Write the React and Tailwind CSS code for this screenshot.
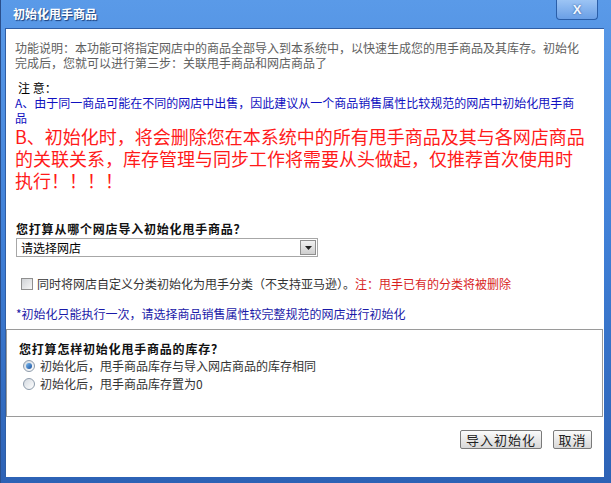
import React from "react";

const font = { fontFamily: '"Noto Sans CJK SC", "Liberation Sans", sans-serif' };

const Radio = ({ checked }) => (
  <span className="relative inline-flex w-[12px] h-[12px] rounded-full border border-[#8d9bab] bg-gradient-to-br from-[#d3d9e0] to-white items-center justify-center mr-[5px] shrink-0">
    {checked && (
      <span className="w-[6px] h-[6px] rounded-full bg-gradient-to-br from-[#7dbdf2] to-[#1a4f9c]" />
    )}
  </span>
);

const App = () => {
  return (
    <div
      className="w-[611px] h-[483px] bg-gradient-to-b from-[#5a9ae8] via-[#3f7fd6] to-[#2d62b5] flex flex-col text-[12px] border-l border-[#2a4f8c]"
      style={font}
    >
      {/* title bar */}
      <div className="h-[28px] shrink-0 flex items-start justify-between pl-[12px] pr-[13px]">
        <span
          className="mt-[6px] text-white font-bold text-[12px] leading-[16px]"
          style={{ textShadow: "1px 1px 1px #1b3f7a" }}
        >
          初始化甩手商品
        </span>
        <div
          className="w-[42px] h-[20px] rounded-b-[4px] border border-t-0 border-[#2a5ea8] bg-gradient-to-b from-[#9cc4f4] to-[#6a9fe6] flex items-center justify-center text-[#f2f7ff] font-bold text-[13px]"
          style={{ fontFamily: '"Liberation Sans", sans-serif', textShadow: "0 0 2px #24508f" }}
        >
          X
        </div>
      </div>

      {/* client area */}
      <div className="flex-1 ml-[4px] mr-[7px] mb-[6px] bg-white border-l border-t border-[#2f5ea5] flex flex-col">
        <div className="pl-[9px] pt-[11px] w-[582px]">
          <p className="text-[#5e5e5e] leading-[15px] whitespace-nowrap">
            功能说明：本功能可将指定网店中的商品全部导入到本系统中，以快速生成您的甩手商品及其库存。初始化
            <br />
            完成后，您就可以进行第三步：关联甩手商品和网店商品了
          </p>
          <p className="mt-[10px] pl-[3px] leading-[15px] text-black">注 意：</p>
          <p className="leading-[15px] text-[#1010c0] whitespace-nowrap">
            A、由于同一商品可能在不同的网店中出售，因此建议从一个商品销售属性比较规范的网店中初始化甩手商
            <br />
            品
          </p>
          <p className="leading-[22px] text-[18px] text-[#ff1a1a]">
            B、初始化时，将会删除您在本系统中的所有甩手商品及其与各网店商品的关联关系，库存管理与同步工作将需要从头做起，仅推荐首次使用时执行！！！！
          </p>
        </div>

        <div className="pl-[10px]">
          <p className="mt-[30px] font-bold leading-[16px] tracking-[0.8px] text-[#111]">您打算从哪个网店导入初始化甩手商品？</p>
          <div className="mt-[1px] w-[302px] h-[19px] border border-[#a7a7a7] flex items-center justify-between bg-white">
            <span className="pl-[4px] text-[12px] text-black">请选择网店</span>
            <span className="w-[16px] h-[15px] mr-[1px] border border-[#8f8f8f] bg-gradient-to-b from-[#f1f1f1] to-[#cfcfcf] flex items-center justify-center">
              <svg width="7" height="4" viewBox="0 0 7 4">
                <path d="M0 0 L7 0 L3.5 4 Z" fill="#222" />
              </svg>
            </span>
          </div>

          <div className="mt-[19px] pl-[5px] flex items-center h-[16px]">
            <span className="w-[12px] h-[12px] border border-[#8f8f8f] bg-gradient-to-br from-[#cfd2d6] to-[#f6f6f6] mr-[4px] shrink-0" />
            <span className="text-[#333]">同时将网店自定义分类初始化为甩手分类（不支持亚马逊）。</span>
            <span className="text-[#d81e1e]">注：甩手已有的分类将被删除</span>
          </div>

          <p className="mt-[14px] leading-[16px] text-[#1a1aa8]">*初始化只能执行一次，请选择商品销售属性较完整规范的网店进行初始化</p>
        </div>

        <div className="mt-[7px] mr-[1px] h-[88px] border border-[#9a9a9a] pl-[12px] pt-[11px]">
          <p className="font-bold leading-[16px] tracking-[0.8px] text-[#111]">您打算怎样初始化甩手商品的库存？</p>
          <div className="flex items-center h-[18px] pl-[4px] text-[#333]">
            <Radio checked />
            初始化后，甩手商品库存与导入网店商品的库存相同
          </div>
          <div className="flex items-center h-[18px] pl-[4px] text-[#333]">
            <Radio />
            初始化后，甩手商品库存置为0
          </div>
        </div>

        <div className="mt-[13px] flex justify-end pr-[12px] gap-[11px]">
          <button className="w-[82px] h-[19px] rounded-[2px] border border-[#7a7a7a] bg-gradient-to-b from-[#fbfbfb] to-[#d8d8d8] text-[13px] leading-none text-[#222] tracking-[1px]">
            导入初始化
          </button>
          <button className="w-[39px] h-[19px] rounded-[2px] border border-[#7a7a7a] bg-gradient-to-b from-[#fbfbfb] to-[#d8d8d8] text-[13px] leading-none text-[#222] tracking-[1px]">
            取消
          </button>
        </div>
      </div>
    </div>
  );
};

export default App;
